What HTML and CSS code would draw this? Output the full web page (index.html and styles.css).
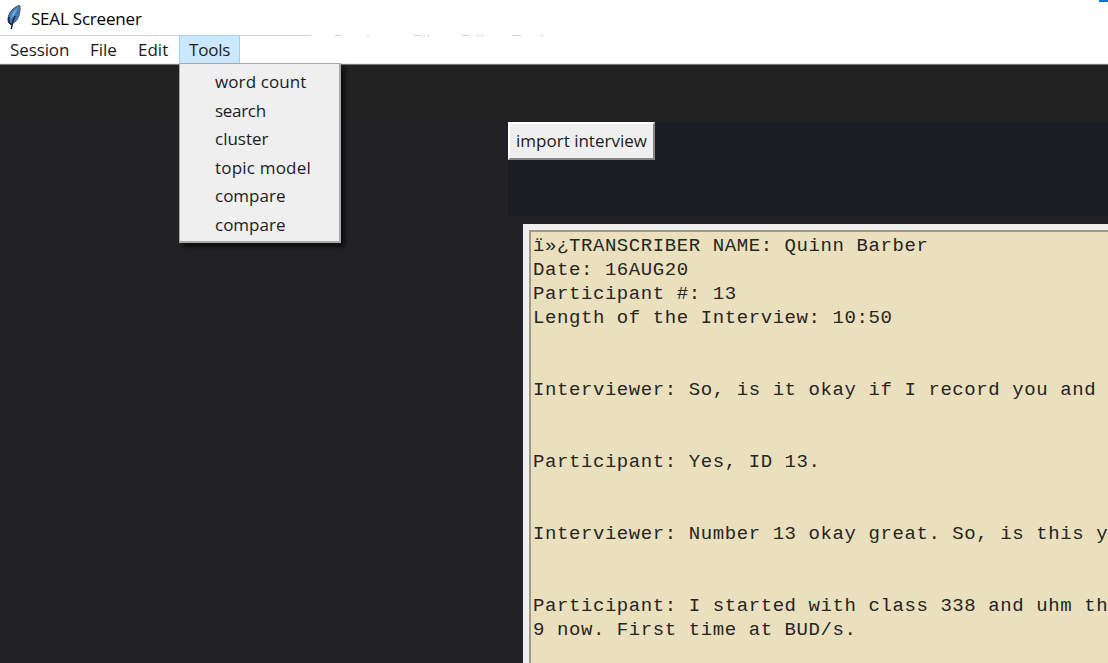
FILE: index.html
```html
<!DOCTYPE html>
<html lang="en">
<head>
<meta charset="utf-8">
<title>SEAL Screener</title>
<link rel="stylesheet" href="styles.css">
</head>
<body>
<div class="window">
  <header class="titlebar">
    <svg class="feather" width="18" height="26" viewBox="0 0 18 26">
      <path d="M14.500 1.500C10 2 5 7 3.500 12C2.500 15.500 2.800 18 4.500 19.500L6 21L8.500 19C12 17 14 13 14.800 8C15.200 5 15.300 2 14.500 1.500Z" fill="#4079b8" stroke="#50555c"/>
      <path d="M13 3.500C9.500 6 6.500 10 5.500 15L9.500 10.500Z" fill="#78aee2"/>
      <path d="M10 12C8.500 15 7 18 6.300 25M3.700 13L4.200 18.500L6 20" fill="none" stroke="#172331" stroke-width="1.500"/>
    </svg>
    <span class="title">SEAL Screener</span>
    <span class="accent"></span>
  </header>
  <nav class="menubar">
    <span class="menu session">Session</span>
    <span class="menu file">File</span>
    <span class="menu edit">Edit</span>
    <span class="menu tools">Tools</span>
    <svg class="remnants" width="250" height="1" viewBox="0 0 250 1">
      <path d="M36 .5H42M68 .5H70M115 .5H122M124 .5H126M128 .5H130M163 .5H170M178 .5H180M182 .5H184M213 .5H222M242 .5H244" stroke="#cfcfcf"/>
    </svg>
    <div class="dropdown">
      <div class="item wc">word count</div>
      <div class="item narrow">search</div>
      <div class="item">cluster</div>
      <div class="item topic">topic model</div>
      <div class="item">compare</div>
      <div class="item">compare</div>
    </div>
  </nav>
  <div class="band"></div>
  <main class="workspace">
    <section class="toolbar"><button class="import">import interview</button></section>
    <pre class="transcript">ï»¿TRANSCRIBER NAME: Quinn Barber
Date: 16AUG20
Participant #: 13
Length of the Interview: 10:50


Interviewer: So, is it okay if I record you and


Participant: Yes, ID 13.


Interviewer: Number 13 okay great. So, is this y


Participant: I started with class 338 and uhm th
9 now. First time at BUD/s.</pre>
  </main>
</div>
</body>
</html>
```
FILE: styles.css
```css
* { box-sizing: border-box; }
body { margin: 0; overflow: hidden; font-family: "Open Sans", "Noto Sans", sans-serif; font-size: 17px; color: #1b1b1f; }
.window { width: 1108px; height: 663px; display: flex; flex-direction: column; background: #222126; overflow: hidden; }
.titlebar { position: relative; height: 35px; flex: none; display: flex; align-items: center; background: #fff; padding-left: 5px; }
.feather { flex: none; margin-top: -2px; }
.title { margin-left: 8px; padding-top: 2px; color: #000; letter-spacing: -0.2px; line-height: 24px; }
.accent { position: absolute; right: 0; top: 0; width: 9px; height: 2px; background: #0078d7; }
.menubar { position: relative; height: 30px; flex: none; display: flex; background: #fff; border-bottom: 1px solid #777; box-shadow: inset 0 -1px #ececec; }
.menubar::before { content: ""; position: absolute; left: 0; top: 0; width: 311px; height: 1px; background: #cfcfcf; }
.menu { position: relative; height: 29px; line-height: 29px; white-space: nowrap; }
.session { width: 79px; padding-left: 10px; letter-spacing: -0.1px; }
.file { width: 48px; padding-left: 11px; }
.edit { width: 52px; padding-left: 11px; }
.tools { width: 61px; padding-left: 9px; background: #cce8ff; border: 1px solid #99d1ff; line-height: 27px; letter-spacing: -0.2px; }
.remnants { position: absolute; left: 299px; top: 0; }
.dropdown { position: absolute; z-index: 2; left: 179px; top: 28px; width: 162px; height: 180px; padding: 4px 0 0 34px; background: #efefef; border: 2px solid #a9a9a9; border-left-width: 1px; border-top-width: 1px; box-shadow: 4px 4px 4px rgba(0,0,0,.6); }
.item { height: 28.5px; line-height: 28.5px; padding-left: 1px; white-space: nowrap; }
.wc { letter-spacing: 0.1px; }
.narrow { letter-spacing: -0.3px; }
.topic { letter-spacing: 0.2px; }
.band { height: 57px; flex: none; background: #222; }
.workspace { flex: 1; display: flex; flex-direction: column; min-height: 0; padding-left: 508px; }
.toolbar { height: 94px; flex: none; background: #1a1d21; }
.import { display: block; width: 147px; height: 38px; padding: 0 0 1px; font: inherit; color: inherit; background: #efefef; border: 2px solid; border-color: #fff #858585 #858585 #fff; white-space: nowrap; }
.transcript { flex: 1; width: 620px; margin: 8px 0 0 15px; padding: 4px 0 0 4px; background: #eae0bd; border: 6px solid #f0f0f0; border-width: 6px 0 0 6px; box-shadow: inset 2px 2px #a19b85; font: 19px/24px "Liberation Mono", monospace; letter-spacing: 0.58px; color: #26251f; overflow: hidden; white-space: pre; }
```
